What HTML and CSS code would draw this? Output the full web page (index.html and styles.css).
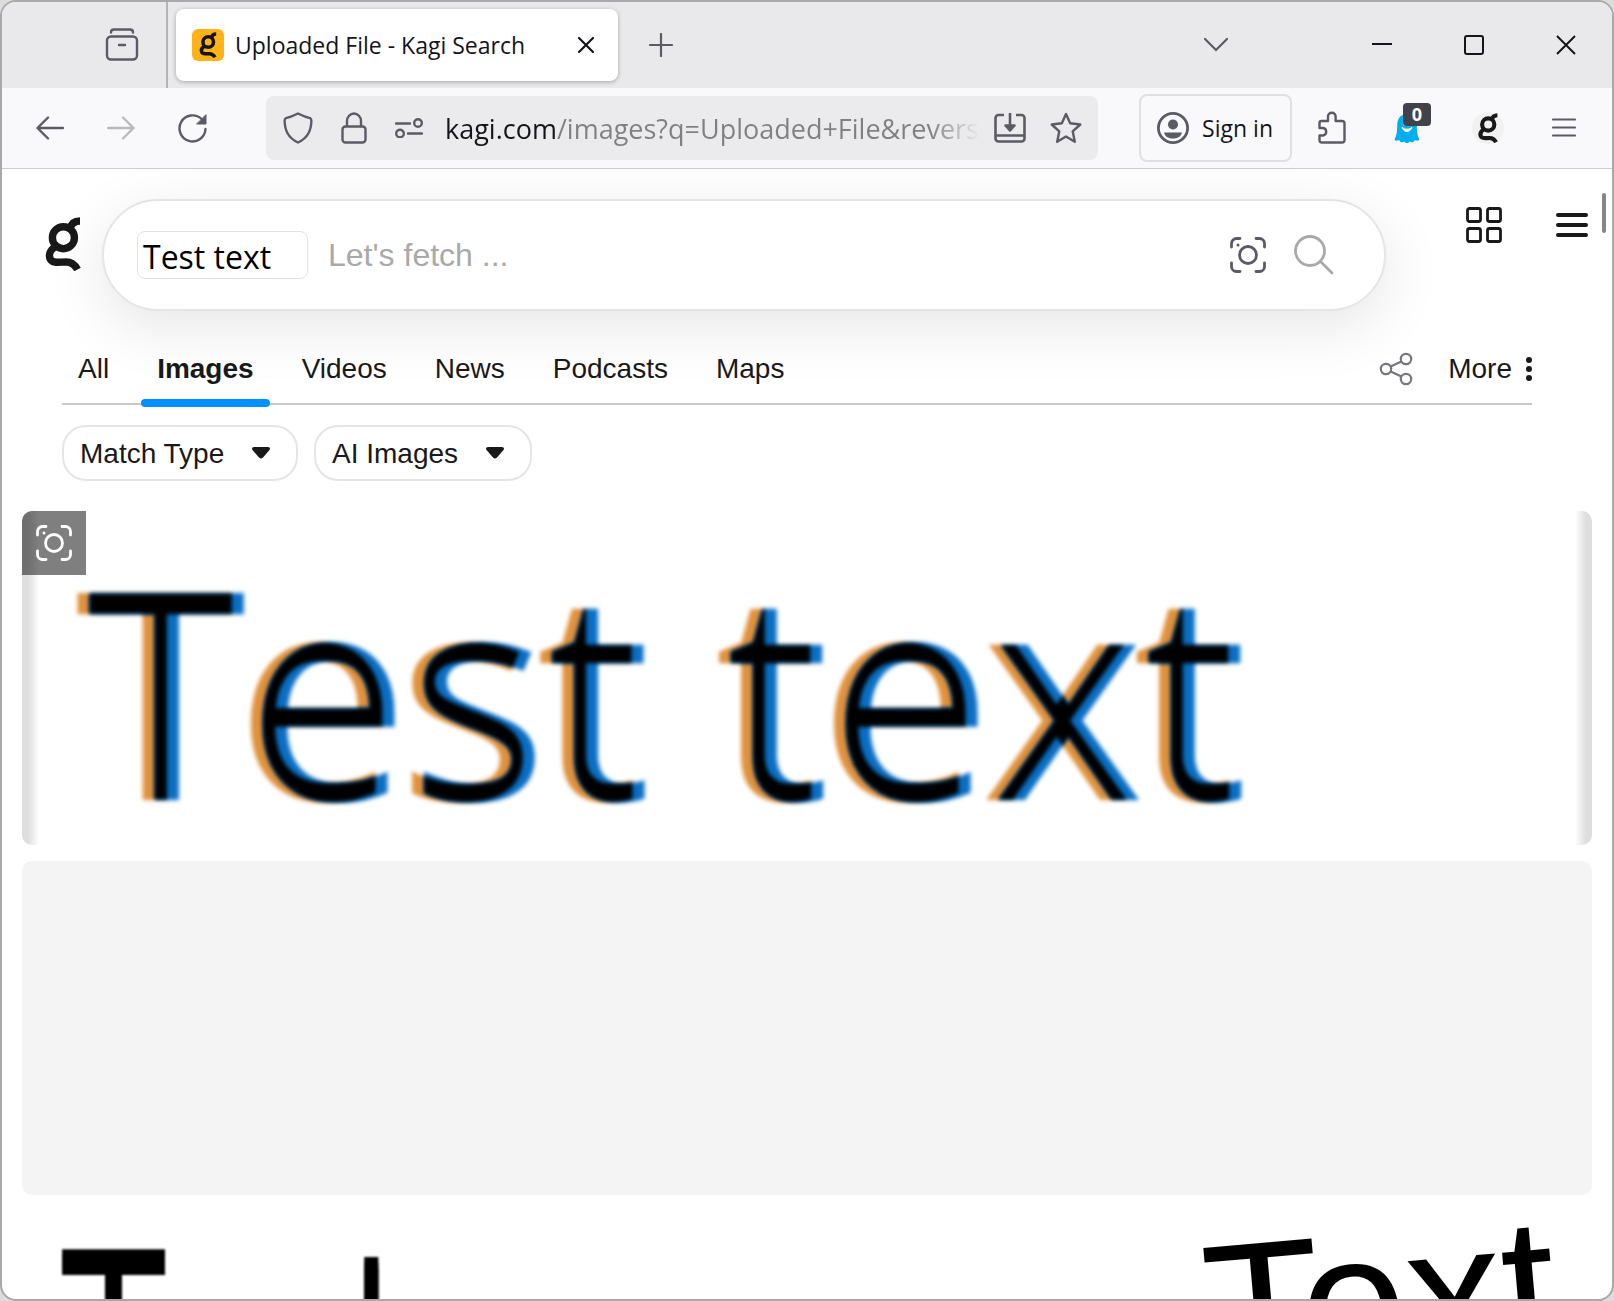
FILE: index.html
```html
<!DOCTYPE html>
<html lang="en">
<head>
    <meta charset="UTF-8">
    <meta name="viewport" content="width=device-width, initial-scale=1.0">
    <title>Uploaded File - Kagi Search</title>
    <link rel="stylesheet" href="styles.css">
</head>
<body>
    <!-- Shared symbols -->
    <svg class="defs" width="0" height="0" aria-hidden="true">
        <symbol id="logo-g" viewBox="15 17 36 54">
            <g fill="none" stroke="currentColor" stroke-width="7.4">
                <circle cx="33.4" cy="37.7" r="11"/>
                <path d="M40 29C41 24 44 21 50 21"/>
                <path d="M26 46C20 50 18 55 20.500 59.500C23 63.500 29 62 36 62C42 62 45 65 47.500 69.500"/>
            </g>
        </symbol>
        <symbol id="lens" viewBox="0 0 36 36">
            <g fill="none" stroke="currentColor" stroke-width="2.8" stroke-linecap="round">
                <path d="M1.500 10V6.500a5 5 0 0 1 5-5H10M26 1.500h3.500a5 5 0 0 1 5 5V10M34.500 26v3.500a5 5 0 0 1-5 5H26M10 34.500H6.500a5 5 0 0 1-5-5V26"/>
                <circle cx="18" cy="18" r="8.500"/>
            </g>
            <circle cx="8" cy="8" r="1.500" fill="currentColor"/>
        </symbol>
        <filter id="subpixel" x="-5%" y="-5%" width="110%" height="110%" color-interpolation-filters="sRGB">
            <feGaussianBlur in="SourceAlpha" stdDeviation="2" result="soft"/>
            <feOffset in="soft" dx="-6" result="left"/>
            <feOffset in="soft" dx="6" result="right"/>
            <feFlood flood-color="#e0913c"/>
            <feComposite in2="left" operator="in" result="orange"/>
            <feFlood flood-color="#0a6fc4"/>
            <feComposite in2="right" operator="in" result="blue"/>
            <feComposite in="left" in2="right" operator="in" result="core"/>
            <feMerge>
                <feMergeNode in="orange"/>
                <feMergeNode in="blue"/>
                <feMergeNode in="core"/>
            </feMerge>
        </filter>
    </svg>

    <div class="window">
        <!-- Tab strip -->
        <div class="tab-strip">
            <button class="icon-btn recent" aria-label="Recent browsing">
                <svg width="34" height="34" viewBox="0 0 34 34" fill="none" stroke="currentColor" stroke-width="2.4" stroke-linecap="round">
                    <path d="M6 4.500c0-2 1.500-3 3-3h16c1.500 0 3 1 3 3"/>
                    <rect x="2" y="8.500" width="30" height="23" rx="4"/>
                    <path d="M14 17h6"/>
                </svg>
            </button>
            <div class="tab">
                <span class="favicon"><svg width="20" height="26"><use href="#logo-g"/></svg></span>
                <span class="tab-title">Uploaded File - Kagi Search</span>
                <button class="icon-btn tab-close" aria-label="Close tab">
                    <svg width="18" height="18" viewBox="0 0 18 18" fill="none" stroke="currentColor" stroke-width="2.2" stroke-linecap="round"><path d="M2 2l14 14M16 2L2 16"/></svg>
                </button>
            </div>
            <button class="icon-btn new-tab" aria-label="New tab">
                <svg width="24" height="24" viewBox="0 0 24 24" fill="none" stroke="currentColor" stroke-width="2.2" stroke-linecap="round"><path d="M12 1v22M1 12h22"/></svg>
            </button>
            <div class="window-buttons">
                <button class="icon-btn all-tabs" aria-label="List all tabs">
                    <svg width="26" height="16" viewBox="0 0 26 16" fill="none" stroke="currentColor" stroke-width="2.2" stroke-linecap="round"><path d="M2 2l11 11L24 2"/></svg>
                </button>
                <button class="icon-btn" aria-label="Minimize">
                    <svg width="20" height="20" viewBox="0 0 20 20" stroke="currentColor" stroke-width="2"><path d="M0 9h20"/></svg>
                </button>
                <button class="icon-btn" aria-label="Maximize">
                    <svg width="20" height="20" viewBox="0 0 20 20" fill="none" stroke="currentColor" stroke-width="2"><rect x="1" y="1" width="18" height="18" rx="2"/></svg>
                </button>
                <button class="icon-btn" aria-label="Close">
                    <svg width="20" height="20" viewBox="0 0 20 20" fill="none" stroke="currentColor" stroke-width="2"><path d="M1 1l18 18M19 1L1 19"/></svg>
                </button>
            </div>
        </div>

        <!-- Toolbar -->
        <div class="toolbar">
            <div class="nav-buttons">
                <button class="icon-btn" aria-label="Back">
                    <svg width="28" height="24" viewBox="0 0 28 24" fill="none" stroke="currentColor" stroke-width="2.4" stroke-linecap="round" stroke-linejoin="round"><path d="M27 12H1.500M12 1.500L1.500 12L12 22.500"/></svg>
                </button>
                <button class="icon-btn" aria-label="Forward" disabled>
                    <svg width="28" height="24" viewBox="0 0 28 24" fill="none" stroke="currentColor" stroke-width="2.4" stroke-linecap="round" stroke-linejoin="round"><path d="M1 12h25.500M16 1.500L26.500 12L16 22.500"/></svg>
                </button>
                <button class="icon-btn" aria-label="Reload">
                    <svg width="30" height="30" viewBox="0 0 30 30" fill="none" stroke="currentColor" stroke-width="2.4" stroke-linecap="round"><path d="M27.500 16A13 13 0 1 1 23.500 6"/><path d="M28 2v9h-9z" fill="currentColor" stroke-width="1"/></svg>
                </button>
            </div>

            <div class="url-bar">
                <svg width="30" height="32" viewBox="0 0 30 32" fill="none" stroke="currentColor" stroke-width="2.4" stroke-linejoin="round"><path d="M15 1.500C10 4 6 5.500 3 6.200Q1.500 6.800 1.600 9C2 18 4.500 25.500 15 30.500C25.500 25.500 28 18 28.400 9Q28.500 6.800 27 6.200C24 5.500 20 4 15 1.500z"/></svg>
                <svg width="26" height="32" viewBox="0 0 26 32" fill="none" stroke="currentColor" stroke-width="2.4"><rect x="1.500" y="14.500" width="23" height="16" rx="3"/><path d="M6 14V9a7 7.500 0 0 1 14 0v5"/></svg>
                <svg width="28" height="20" viewBox="0 0 28 20" fill="none" stroke="currentColor" stroke-width="2.4" stroke-linecap="round"><path d="M1 5.500h14M13 15.500h14"/><circle cx="23" cy="5" r="3.800"/><circle cx="5" cy="15.500" r="3.800"/></svg>
                <input class="url" type="text" aria-label="Address" value="kagi.com/images?q=Uploaded+File&amp;reverse=upload">
                <button class="icon-btn" aria-label="Save page">
                    <svg width="32" height="30" viewBox="0 0 32 30" fill="none" stroke="currentColor" stroke-width="2.6"><path d="M10 2H4.500a3 3 0 0 0-3 3v20.500a3 3 0 0 0 3 3h23a3 3 0 0 0 3-3V5a3 3 0 0 0-3-3H22M1.500 22.500h29M16 0v14"/><path d="M11.500 12.500h9L16 17.500z" fill="currentColor" stroke-linejoin="round"/></svg>
                </button>
                <button class="icon-btn" aria-label="Bookmark">
                    <svg width="32" height="32" viewBox="0 0 32 32" fill="none" stroke="currentColor" stroke-width="2.4" stroke-linejoin="round"><path d="M16 2l4.200 9.300L30.300 12.500L22.700 19.300L24.800 29.800L16 24.500L7.200 29.800L9.300 19.300L1.700 12.500L11.800 11.300z"/></svg>
                </button>
            </div>

            <button class="sign-in">
                <svg width="32" height="32" viewBox="0 0 32 32" fill="none"><circle cx="16" cy="16" r="14.600" stroke="currentColor" stroke-width="2.800"/><circle cx="16" cy="12.500" r="5" fill="currentColor"/><path d="M7 20.500h18C24 25 20 26.500 16 26.500S8 25 7 20.500z" fill="currentColor"/></svg>
                <span>Sign in</span>
            </button>

            <div class="extensions">
                <button class="icon-btn" aria-label="Extensions">
                    <svg width="28" height="34" viewBox="0 0 28 34" fill="none" stroke="currentColor" stroke-width="2.400" stroke-linejoin="round"><path d="M1.500 17V12q0-2 2-2H10V5.500a3.800 3.800 0 0 1 7.600 0V10H24q2.500 0 2.500 2.500V29q0 2.500-2.500 2.500H4q-2.500 0-2.500-2.500V24.500H5a3.800 3.800 0 0 0 0-7.500z"/></svg>
                </button>
                <button class="icon-btn ghost" aria-label="Ghostery">
                    <svg width="26" height="30" viewBox="0 0 26 30"><path d="M13 1C6 1 3.500 6 3.200 12C3 18 3 22 .5 26.500C2.500 29 4 26.500 5.500 27.500C7.500 31 9 28.500 10.500 28.500C12 31 14 31 15.500 28.500C17 28.500 18.500 31 20.500 27.500C22 26.500 23.500 29 25.500 26.500C23 22 23 18 22.800 12C22.500 6 20 1 13 1z" fill="#00aef0"/><path d="M8 14c1.500 6 8.500 6 10 0c-2 3-8 3-10 0z" fill="#fff" stroke="#fff"/><ellipse cx="10.500" cy="10" rx="1.500" ry="2.500" fill="#fff"/><ellipse cx="16" cy="10" rx="1.500" ry="2.500" fill="#fff"/></svg>
                    <span class="badge">0</span>
                </button>
                <button class="icon-btn kagi-ext" aria-label="Kagi Search">
                    <svg width="22" height="30"><use href="#logo-g"/></svg>
                </button>
                <button class="icon-btn" aria-label="Open application menu">
                    <svg width="24" height="20" viewBox="0 0 24 20" stroke="currentColor" stroke-width="2.200" stroke-linecap="round"><path d="M1 1.500h22M1 9.500h22M1 17.500h22"/></svg>
                </button>
            </div>
        </div>

        <!-- Page -->
        <div class="page">
            <header class="header">
                <a class="logo" href="#" aria-label="Kagi"><svg width="36" height="54"><use href="#logo-g"/></svg></a>
                <form class="search">
                    <span class="thumb">Test text</span>
                    <input class="search-input" type="text" placeholder="Let's fetch ..." aria-label="Search">
                    <button class="icon-btn" type="button" aria-label="Reverse image search"><svg width="36" height="36"><use href="#lens"/></svg></button>
                    <button class="icon-btn find" aria-label="Search">
                        <svg width="40" height="40" viewBox="0 0 40 40" fill="none" stroke="currentColor" stroke-width="2.800" stroke-linecap="round"><circle cx="16" cy="16" r="14.500"/><path d="M26.500 26.500L38 38"/></svg>
                    </button>
                </form>
                <div class="header-buttons">
                    <button class="icon-btn" aria-label="Apps">
                        <svg width="36" height="36" viewBox="0 0 36 36" fill="none" stroke="currentColor" stroke-width="2.800"><rect x="1.500" y="1.500" width="13" height="13" rx="2"/><rect x="21.500" y="1.500" width="13" height="13" rx="2"/><rect x="1.500" y="21.500" width="13" height="13" rx="2"/><rect x="21.500" y="21.500" width="13" height="13" rx="2"/></svg>
                    </button>
                    <button class="icon-btn" aria-label="Menu">
                        <svg width="32" height="24" viewBox="0 0 32 24" stroke="currentColor" stroke-width="4" stroke-linecap="round"><path d="M2 2h28M2 12h28M2 22h28"/></svg>
                    </button>
                </div>
            </header>

            <nav class="nav">
                <a href="#">All</a>
                <a href="#" class="active">Images</a>
                <a href="#">Videos</a>
                <a href="#">News</a>
                <a href="#">Podcasts</a>
                <a href="#">Maps</a>
                <button class="icon-btn share" aria-label="Share">
                    <svg width="34" height="34" viewBox="0 0 34 34" fill="none" stroke="currentColor" stroke-width="2.200"><circle cx="7" cy="17" r="5.200"/><circle cx="27" cy="7" r="5.200"/><circle cx="27" cy="27" r="5.200"/><path d="M11.600 14.600L22.400 9.400M11.600 19.400L22.400 24.600"/></svg>
                </button>
                <button class="more">More
                    <svg width="6" height="24" viewBox="0 0 6 24" fill="currentColor"><circle cx="3" cy="3" r="3"/><circle cx="3" cy="12" r="3"/><circle cx="3" cy="21" r="3"/></svg>
                </button>
            </nav>

            <div class="filters">
                <div class="filter">
                    <select aria-label="Match Type"><option>Match Type</option></select>
                    <svg class="arrow" width="18" height="12" viewBox="0 0 18 12" fill="currentColor"><path d="M2 0h14q3 .5 1.500 3L11 10.500q-2 2-4 0L.5 3Q-1 .5 2 0z"/></svg>
                </div>
                <div class="filter">
                    <select aria-label="AI Images"><option>AI Images</option></select>
                    <svg class="arrow" width="18" height="12" viewBox="0 0 18 12" fill="currentColor"><path d="M2 0h14q3 .5 1.500 3L11 10.500q-2 2-4 0L.5 3Q-1 .5 2 0z"/></svg>
                </div>
            </div>

            <main class="results">
                <div class="tile tile-wide">
                    <span class="sample">Test text</span>
                    <button class="lens-btn" aria-label="Search with this image"><svg width="36" height="36"><use href="#lens"/></svg></button>
                </div>
                <div class="tile tile-wide placeholder"></div>
                <div class="row">
                    <div class="tile tile-bold"><span>T</span><span class="short">l</span></div>
                    <div class="tile tile-tilted"><span>Text</span></div>
                </div>
            </main>
            <div class="scrollbar"></div>
        </div>
    </div>
</body>
</html>
```
FILE: styles.css
```css
* {
    box-sizing: border-box;
}
body {
    margin: 0;
    background-color: #dcdcdc;
    font-family: "Liberation Sans", Arial, sans-serif;
    color: #19191a;
}
button, input, select {
    font: inherit;
    color: inherit;
    border: none;
    background: none;
    padding: 0;
    margin: 0;
    outline: none;
}
svg {
    display: block;
    flex: none;
}
.defs {
    position: absolute;
}
.icon-btn {
    display: flex;
    align-items: center;
    justify-content: center;
    flex: none;
}
.window {
    display: flex;
    flex-direction: column;
    height: 100vh;
    overflow: hidden;
    border: 2px solid #a9a9a9;
    border-radius: 16px;
    background-color: #fff;
}

/* Tab strip */
.tab-strip {
    display: flex;
    align-items: center;
    flex: none;
    height: 86px;
    background-color: #e9e9eb;
    color: #5b5b66;
    font-family: "Open Sans", "Segoe UI", sans-serif;
}
.recent {
    width: 166px;
    height: 86px;
    padding-left: 76px;
    border-right: 2px solid #b4b4b8;
}
.tab {
    display: flex;
    align-items: center;
    width: 442px;
    height: 72px;
    margin-left: 8px;
    padding: 0 23px 0 16px;
    background-color: #fff;
    border-radius: 8px;
    box-shadow: 0 1px 4px rgba(0, 0, 0, 0.3);
    color: #15141a;
}
.favicon {
    display: flex;
    align-items: center;
    justify-content: center;
    width: 32px;
    height: 32px;
    border-radius: 6px;
    background-color: #ffb319;
}
.tab-title {
    flex: 1;
    margin-left: 11px;
    font-size: 23px;
    white-space: nowrap;
}
.new-tab {
    margin-left: 31px;
}
.window-buttons {
    display: flex;
    gap: 72px;
    margin-left: auto;
    margin-right: 36px;
    color: #15141a;
}
.all-tabs {
    margin-right: 71px;
    color: #5b5b66;
}

/* Toolbar */
.toolbar {
    display: flex;
    align-items: center;
    flex: none;
    height: 81px;
    padding: 0 36px 0 34px;
    background-color: #f9f9fb;
    border-bottom: 1px solid #ccc;
    color: #5b5b66;
    font-family: "Open Sans", "Segoe UI", sans-serif;
}
.nav-buttons {
    display: flex;
    gap: 43px;
}
.nav-buttons button:disabled {
    opacity: 0.4;
}
.url-bar {
    display: flex;
    align-items: center;
    flex: 1;
    min-width: 0;
    height: 64px;
    margin-left: 58px;
    padding: 0 16px 0 17px;
    gap: 28px;
    background-color: #ebebed;
    border-radius: 8px;
}
.url {
    flex: 1;
    min-width: 0;
    height: 40px;
    margin-left: -6px;
    margin-right: -14px;
    font-size: 27px;
    color: transparent;
    background: linear-gradient(to right, #15141a 111px, #808084 111px, #808084 calc(100% - 50px), transparent);
    -webkit-background-clip: text;
    background-clip: text;
}
.url-bar .icon-btn + .icon-btn {
    margin-left: -4px;
}
.sign-in {
    display: flex;
    align-items: center;
    flex: none;
    gap: 13px;
    height: 68px;
    margin-left: 41px;
    padding: 0 17px 0 16px;
    border: 2px solid #e0e0e3;
    border-radius: 8px;
    font-size: 23px;
    white-space: nowrap;
}
.sign-in span {
    color: #15141a;
}
.extensions {
    display: flex;
    align-items: center;
    margin-left: 26px;
    gap: 48px;
}
.ghost {
    position: relative;
}
.badge {
    position: absolute;
    left: 9px;
    top: -10px;
    width: 28px;
    height: 23px;
    border-radius: 4px;
    background-color: #42424a;
    color: #fff;
    font-size: 18px;
    font-weight: bold;
    line-height: 23px;
    text-align: center;
}
.kagi-ext {
    width: 32px;
    height: 32px;
    margin-left: 4px;
    border-radius: 50%;
    background-color: #f1f1f1;
    color: #19191a;
}

/* Page */
.page {
    position: relative;
    flex: 1;
    min-height: 0;
    overflow: hidden;
}
.header {
    display: flex;
    align-items: flex-start;
    padding: 30px 24px 0 43px;
}
.logo {
    margin-top: 18px;
    color: inherit;
}
.search {
    display: flex;
    align-items: center;
    flex: 1;
    min-width: 0;
    height: 112px;
    margin-left: 21px;
    padding: 0 50px 0 33px;
    border: 2px solid #e5e5e5;
    border-radius: 56px;
    background-color: #fff;
    box-shadow: 0 16px 60px rgba(0, 0, 0, 0.1);
    color: #5b5b66;
}
.thumb {
    width: 171px;
    height: 48px;
    padding-left: 5px;
    border: 1px solid #e2e2e2;
    border-radius: 8px;
    color: #000;
    font-family: "Open Sans", "Segoe UI", sans-serif;
    font-size: 32px;
    line-height: 50px;
    white-space: nowrap;
}
.search-input {
    flex: 1;
    min-width: 0;
    height: 48px;
    margin-left: 20px;
    font-size: 32px;
}
.search-input::placeholder {
    color: #a9a9a9;
    opacity: 1;
}
.find {
    margin-left: 28px;
    color: #a9a9a9;
}
.header-buttons {
    display: flex;
    align-items: center;
    gap: 54px;
    margin-top: 8px;
    margin-left: 80px;
}

/* Search categories */
.nav {
    position: relative;
    display: flex;
    align-items: center;
    height: 64px;
    margin: 30px 80px 0 60px;
    padding-bottom: 6px;
    border-bottom: 2px solid #c9c9c9;
    font-size: 28px;
}
.nav a {
    position: relative;
    margin-right: 16px;
    padding: 0 16px;
    color: inherit;
    line-height: 56px;
    text-decoration: none;
}
.nav a.active {
    font-weight: bold;
}
.nav a.active::after {
    content: "";
    position: absolute;
    left: 0;
    right: 0;
    bottom: -10px;
    height: 8px;
    border-radius: 4px;
    background-color: #0091ff;
}
.share {
    margin-left: auto;
    color: #75757d;
}
.more {
    display: flex;
    align-items: center;
    gap: 14px;
    margin-left: 35px;
}

/* Filters */
.filters {
    display: flex;
    gap: 16px;
    margin: 20px 60px 0;
}
.filter {
    position: relative;
}
.filter select {
    appearance: none;
    height: 56px;
    padding: 0 71px 0 16px;
    border: 2px solid #e5e5e5;
    border-radius: 24px;
    font-size: 28px;
}
.arrow {
    position: absolute;
    right: 28px;
    top: 22px;
    pointer-events: none;
}

/* Results */
.results {
    display: flex;
    flex-direction: column;
    gap: 16px;
    margin: 30px 20px 0;
}
.tile {
    position: relative;
    height: 334px;
    overflow: hidden;
    border-radius: 10px;
    color: #000;
    white-space: nowrap;
}
.tile-wide {
    display: flex;
    align-items: center;
    padding: 20px 0 0 59px;
    background: linear-gradient(to right, #dedede 6px, transparent 17px, transparent calc(100% - 17px), #dedede calc(100% - 6px));
}
.sample {
    font-family: "Open Sans", "Segoe UI", sans-serif;
    font-size: 290px;
    line-height: 314px;
    filter: url(#subpixel);
}
.lens-btn {
    position: absolute;
    left: 0;
    top: 0;
    display: flex;
    align-items: center;
    justify-content: center;
    width: 64px;
    height: 64px;
    background-color: rgba(0, 0, 0, 0.5);
    color: #fff;
}
.placeholder {
    background: #f4f4f4;
}
.row {
    display: flex;
    gap: 16px;
}
.tile-bold {
    display: flex;
    align-items: baseline;
    gap: 184px;
    width: 442px;
    padding: 9px 0 0 36px;
    font-size: 182px;
    line-height: 182px;
    text-shadow: 0 6px 0 #000, 0 12px 0 #000;
    filter: blur(1px);
}
.short {
    font-size: 162px;
}
.tile-tilted {
    flex: 1;
    padding: 0 36px 0 0;
    font-size: 192px;
    line-height: 176px;
    text-align: right;
}
.tile-tilted span {
    display: inline-block;
    transform: rotate(-5deg);
}
.scrollbar {
    position: absolute;
    right: 6px;
    top: 24px;
    width: 4px;
    height: 40px;
    border-radius: 2px;
    background-color: #868686;
}
```
